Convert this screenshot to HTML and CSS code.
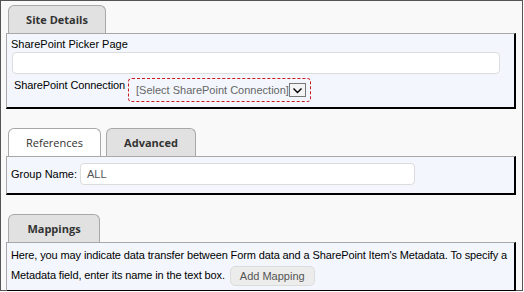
FILE: index.html
```html
<!DOCTYPE html>
<html lang="en">
<head>
  <meta charset="UTF-8" />
  <title>SharePoint Settings</title>
  <link rel="stylesheet" href="styles.css">
</head>
<body>
  <div class="frame">

    <div class="section first">
      <div class="tabs">
        <div class="tab">Site Details</div>
      </div>
      <div class="panel">
        <div class="field-label">SharePoint Picker Page</div>
        <input type="text" class="text-input wide" />
        <div class="conn-row">
          <span class="conn-label">SharePoint Connection</span>
          <div class="select-box">
            <span class="select-text">[Select SharePoint Connection]</span>
            <span class="select-btn">
              <svg width="11" height="7" viewBox="0 0 11 7"><path d="M1.5 1.5 L5.5 5.5 L9.5 1.5" fill="none" stroke="#000" stroke-width="1.4"/></svg>
            </span>
          </div>
        </div>
      </div>
    </div>

    <div class="section">
      <div class="tabs">
        <div class="tab light">References</div>
        <div class="tab adv">Advanced</div>
      </div>
      <div class="panel">
        <div class="group-row">
          <span>Group Name:</span>
          <input type="text" class="text-input group" value="ALL" />
        </div>
      </div>
    </div>

    <div class="section">
      <div class="tabs">
        <div class="tab map">Mappings</div>
      </div>
      <div class="panel">
        <p class="info">Here, you may indicate data transfer between Form data and a SharePoint Item's Metadata. To specify a Metadata field, enter its name in the text box. <button class="add-btn">Add Mapping</button></p>
      </div>
    </div>

  </div>
</body>
</html>
```

FILE: styles.css
```css
body {
  margin: 0;
  font-family: "Liberation Sans", Arial, sans-serif;
  font-size: 11px;
  color: #000;
}

.frame {
  box-sizing: border-box;
  width: 523px;
  height: 291px;
  border: 1px solid #555;
  background: #f9f9f9;
  padding: 4px 0 0 5px;
}

.section {
  margin-top: 19px;
}

.section.first {
  margin-top: 0;
}

.tabs {
  display: flex;
  gap: 5px;
  padding-left: 2px;
}

.tab {
  box-sizing: border-box;
  width: 98px;
  height: 28px;
  border: 1px solid #a8a8a8;
  border-bottom: none;
  border-radius: 6px 6px 0 0;
  background: #e1e1e1;
  font-family: "Open Sans", "Noto Sans", sans-serif;
  font-size: 11px;
  font-weight: bold;
  color: #333;
  text-align: center;
  line-height: 27px;
}

.tab.light {
  width: 93px;
  background: #fff;
  font-weight: normal;
}

.tab.adv {
  width: 90px;
}

.tab.map {
  width: 92px;
}

.panel {
  box-sizing: border-box;
  width: 510px;
  background: #f3f7fd;
  border-top: 1px solid #a8a8a8;
  border-left: 1px solid #a8a8a8;
  border-right: 2px solid #000;
  border-bottom: 2px solid #000;
}

.section.first .panel {
  padding: 3px 0 5px 4px;
}

.field-label {
  line-height: 15px;
}

.text-input {
  box-sizing: border-box;
  height: 22px;
  border: 1px solid #dcdcdc;
  border-radius: 4px;
  background: #fff;
  font-family: "Liberation Sans", Arial, sans-serif;
  font-size: 11px;
  color: #555;
  padding: 0 6px;
  outline: none;
}

.text-input.wide {
  display: block;
  width: 488px;
  margin: 0 0 0 1px;
}

.conn-row {
  display: flex;
  align-items: flex-start;
  margin-top: 4px;
}

.conn-label {
  margin: 1px 0 0 3px;
  width: 114px;
  white-space: nowrap;
  letter-spacing: -0.1px;
}

.select-box {
  box-sizing: border-box;
  display: flex;
  align-items: center;
  width: 183px;
  height: 24px;
  border: 1px dashed #c8191e;
  border-radius: 4px;
  padding: 0 4px 0 7px;
}

.select-text {
  color: #666;
  flex: 1;
}

.select-btn {
  box-sizing: border-box;
  display: flex;
  align-items: center;
  justify-content: center;
  width: 17px;
  height: 14px;
  border: 1px solid #777;
  background: #f4f4f4;
}

.group-row {
  display: flex;
  align-items: center;
  gap: 3px;
  padding: 6px 0 8px 4px;
}

.text-input.group {
  width: 335px;
}

.info {
  margin: 0;
  padding: 2px 0 4px 4px;
  line-height: 20px;
  letter-spacing: -0.12px;
}

.add-btn {
  box-sizing: border-box;
  height: 20px;
  padding: 0 9px;
  margin-left: 2px;
  border: 1px solid #dcdcdc;
  border-radius: 5px;
  background: #ececec;
  color: #555;
  font-family: "Liberation Sans", Arial, sans-serif;
  font-size: 11px;
  vertical-align: middle;
}
```
